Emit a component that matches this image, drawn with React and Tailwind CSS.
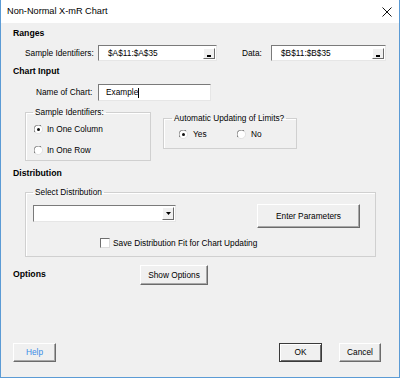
import React from "react";

const font = { fontFamily: '"Liberation Sans", Arial, sans-serif' };

function Radio({ checked }) {
  return (
    <svg width="9" height="9" viewBox="0 0 9 9" className="shrink-0">
      <circle cx="4.5" cy="4.5" r="4" fill="#fff" />
      <path d="M1.2 7.3 A4 4 0 0 1 7.3 1.2" fill="none" stroke="#6e6e6e" strokeWidth="1" />
      <path d="M7.3 1.2 A4 4 0 0 1 1.2 7.3" fill="none" stroke="#e0e0e0" strokeWidth="1" />
      {checked && <circle cx="4.5" cy="4.5" r="1.5" fill="#111" />}
    </svg>
  );
}

function Checkbox() {
  return (
    <div className="w-[10px] h-[10px] bg-white border border-t-[#6e6e6e] border-l-[#6e6e6e] border-r-[#dcdcdc] border-b-[#dcdcdc] shrink-0" />
  );
}

function MiniBtn({ children }) {
  return (
    <div className="w-[12px] h-[11px] bg-[#f0f0f0] border border-t-white border-l-white border-r-[#6b6b6b] border-b-[#6b6b6b] flex items-center justify-center shrink-0">
      {children}
    </div>
  );
}

function RangeInput({ value, width }) {
  return (
    <div
      className={`${width} h-[16px] bg-white border border-t-[#7a7a7a] border-l-[#7a7a7a] border-r-[#e6e6e6] border-b-[#e6e6e6] flex items-center pl-[9px] pr-[1px]`}
    >
      <span className="flex-1 text-[8.3px] leading-none">{value}</span>
      <MiniBtn>
        <div className="w-[4px] h-[2px] bg-black mt-[5px]" />
      </MiniBtn>
    </div>
  );
}

function Button({ children, className = "", def = false }) {
  return (
    <div
      className={`flex items-center justify-center bg-[#f0f0f0] text-[8.3px] ${
        def
          ? "border border-[#3a3a3a] shadow-[inset_1px_1px_0_#fff,inset_-1px_-1px_0_#6b6b6b]"
          : "border border-t-white border-l-white border-r-[#6b6b6b] border-b-[#6b6b6b] shadow-[inset_-1px_-1px_0_#a8a8a8]"
      } ${className}`}
    >
      {children}
    </div>
  );
}

export default function App() {
  return (
    <div
      style={font}
      className="w-[400px] h-[378px] bg-[#f0f0f0] border-l border-r border-b border-[#5b9bd5] flex flex-col text-black text-[8.3px] overflow-hidden"
    >
      {/* Title bar */}
      <div className="h-[23px] bg-white flex items-center pl-[6px] pr-[6px] shrink-0">
        <span className="text-[9.2px] flex-1">Non-Normal X-mR Chart</span>
        <svg width="10" height="10" viewBox="0 0 10 10" className="mr-[1px]">
          <path d="M0.5 0.5 L9.5 9.5 M9.5 0.5 L0.5 9.5" stroke="#111" strokeWidth="1" />
        </svg>
      </div>

      {/* Ranges */}
      <div className="mt-[4px] h-[14px] flex items-center pl-[12px] font-bold text-[8.7px]">Ranges</div>
      <div className="mt-[4px] h-[16px] flex items-center pl-[24px]">
        <span className="w-[73px]">Sample Identifiers:</span>
        <RangeInput value="$A$11:$A$35" width="w-[119px]" />
        <span className="ml-[25px] w-[29px]">Data:</span>
        <RangeInput value="$B$11:$B$35" width="w-[115px]" />
      </div>

      {/* Chart Input */}
      <div className="mt-[4px] h-[14px] flex items-center pl-[12px] font-bold text-[8.7px]">Chart Input</div>
      <div className="mt-[5px] h-[17px] flex items-center pl-[35px]">
        <span className="w-[62px]">Name of Chart:</span>
        <div className="w-[113px] h-[17px] bg-white border border-t-[#7a7a7a] border-l-[#7a7a7a] border-r-[#e6e6e6] border-b-[#e6e6e6] flex items-center pl-[7px]">
          <span>Example</span>
          <span className="w-[1px] h-[10px] bg-black" />
        </div>
      </div>

      {/* Group boxes */}
      <div className="mt-[5px] flex items-start pl-[24px]">
        <fieldset className="w-[126px] h-[55px] border border-[#d0d0d0] shadow-[inset_1px_1px_0_#fff] flex flex-col">
          <legend className="ml-[7px] px-[2px] leading-[12px]">Sample Identifiers:</legend>
          <div className="flex items-center gap-[4px] pl-[8px] mt-[5px]">
            <Radio checked />
            <span>In One Column</span>
          </div>
          <div className="flex items-center gap-[4px] pl-[8px] mt-[9px]">
            <Radio />
            <span>In One Row</span>
          </div>
        </fieldset>
        <fieldset className="ml-[12px] mt-[6px] w-[134px] h-[37px] border border-[#d0d0d0] shadow-[inset_1px_1px_0_#fff] flex flex-col">
          <legend className="ml-[8px] px-[2px] leading-[12px]">Automatic Updating of Limits?</legend>
          <div className="flex items-center pl-[15px] mt-[4px]">
            <Radio checked />
            <span className="ml-[5px] w-[44px]">Yes</span>
            <Radio />
            <span className="ml-[5px]">No</span>
          </div>
        </fieldset>
      </div>

      {/* Distribution */}
      <div className="mt-[6px] h-[14px] flex items-center pl-[12px] font-bold text-[8.7px]">Distribution</div>
      <div className="mt-[5px] pl-[24px]">
        <fieldset className="w-[351px] h-[71px] border border-[#d0d0d0] shadow-[inset_1px_1px_0_#fff] flex flex-col">
          <legend className="ml-[7px] px-[2px] leading-[12px]">Select Distribution</legend>
          <div className="flex items-start pl-[7px] mt-[6px]">
            <div className="w-[143px] h-[17px] mt-[1px] bg-white border border-t-[#7a7a7a] border-l-[#7a7a7a] border-r-[#e6e6e6] border-b-[#e6e6e6] flex items-center justify-end pr-[1px]">
              <div className="w-[12px] h-[13px] bg-[#f0f0f0] border border-t-white border-l-white border-r-[#6b6b6b] border-b-[#6b6b6b] flex items-center justify-center">
                <svg width="5" height="3" viewBox="0 0 5 3">
                  <path d="M0 0 L5 0 L2.5 3 Z" fill="#000" />
                </svg>
              </div>
            </div>
            <Button className="ml-[81px] w-[103px] h-[24px]">Enter Parameters</Button>
          </div>
          <div className="flex items-center pl-[74px] mt-[9px]">
            <Checkbox />
            <span className="ml-[3px]">Save Distribution Fit for Chart Updating</span>
          </div>
        </fieldset>
      </div>

      {/* Options */}
      <div className="mt-[8px] h-[20px] flex items-center pl-[12px]">
        <span className="font-bold text-[8.7px] w-[127px]">Options</span>
        <Button className="w-[68px] h-[20px]">Show Options</Button>
      </div>

      {/* Bottom buttons */}
      <div className="mt-auto mb-[15px] flex items-center pl-[12px] pr-[18px]">
        <Button className="w-[43px] h-[19px] text-[#3a8be6]">Help</Button>
        <div className="flex-1" />
        <Button def className="w-[43px] h-[19px]">OK</Button>
        <Button className="ml-[17px] w-[42px] h-[19px]">Cancel</Button>
      </div>
    </div>
  );
}
